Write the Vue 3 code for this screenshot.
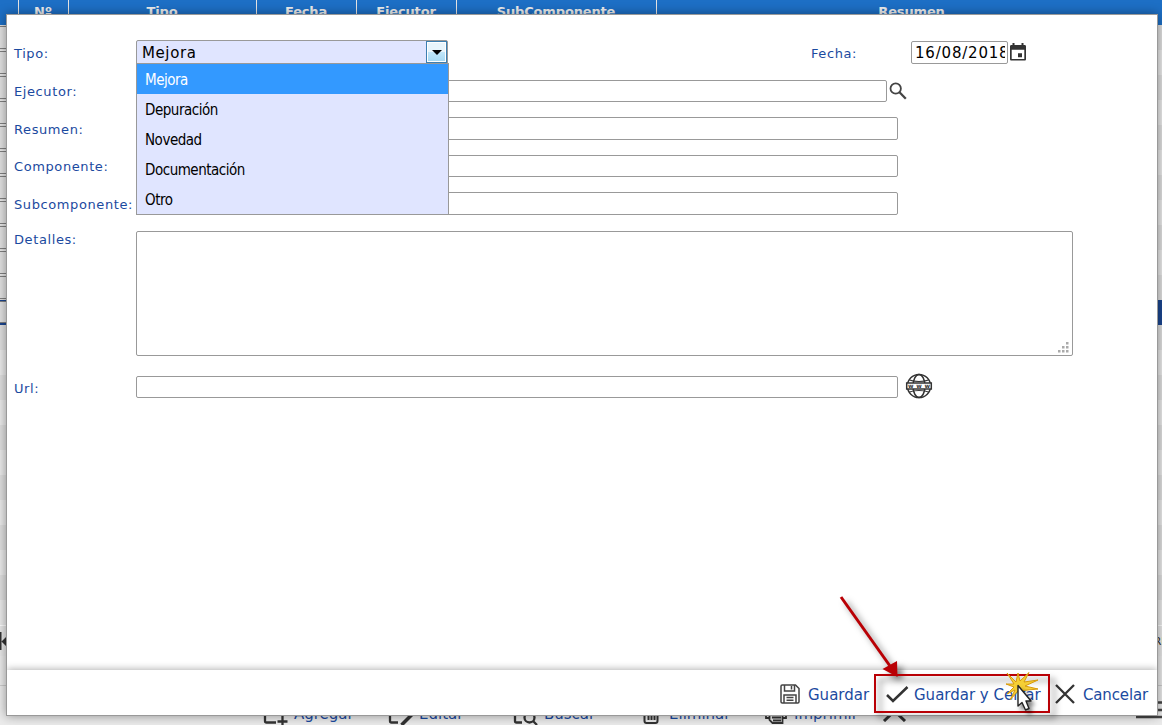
<script setup>
import { ref } from 'vue';

const columns = [
  { name: '', width: 18 },
  { name: 'Nº', width: 50 },
  { name: 'Tipo', width: 188 },
  { name: 'Fecha', width: 100 },
  { name: 'Ejecutor', width: 100 },
  { name: 'SubComponente', width: 200 },
  { name: 'Resumen', width: 511 }
];

const tipos = ['Mejora', 'Depuración', 'Novedad', 'Documentación', 'Otro'];
const tipo = ref('Mejora');
const open = ref(true);

const form = ref({
  fecha: '16/08/2018',
  ejecutor: '',
  resumen: '',
  componente: '',
  subcomponente: '',
  detalles: '',
  url: ''
});

const selectTipo = (value) => {
  tipo.value = value;
  open.value = false;
};
</script>

<template>
  <main class="page">
    <div class="grid-head">
      <div v-for="col in columns" :key="col.name" class="grid-head__cell" :style="{ width: col.width + 'px' }">{{ col.name }}</div>
    </div>
    <div class="grid-rows">
      <div v-for="n in 11" :key="n" class="grid-row"><div class="grid-row__field"></div></div>
      <div class="grid-row grid-row--current"><div class="grid-row__field"></div></div>
      <div v-for="n in 12" :key="'e' + n" class="grid-row grid-row--empty"></div>
    </div>
    <div class="pager">
      <svg width="8" height="20" viewBox="0 0 8 20"><path d="M0 1h1.500v18H0zM8 4v13L1.500 10.500z" fill="#333" /></svg>
      <span>RP</span>
    </div>
    <div class="toolbar">
      <div class="toolbar__item">
        <svg width="26" height="26" viewBox="0 0 26 26"><path d="M20 7V4H3v17q0 1.500 1.500 1.500H14M20.500 16v10M15.500 21.500h10" /></svg>
        <span>Agregar</span>
      </div>
      <div class="toolbar__item">
        <svg width="26" height="26" viewBox="0 0 26 26"><path d="M20 5V4H3v17q0 1.500 1.500 1.500H11" /><path d="M14.500 25L25 14.500" stroke-width="3.500" /></svg>
        <span>Editar</span>
      </div>
      <div class="toolbar__item">
        <svg width="26" height="26" viewBox="0 0 26 26"><path d="M20 7V4H3v17q0 1.500 1.500 1.500H10" /><circle cx="17.500" cy="17.500" r="5" /><path d="M21 21l4 4" /></svg>
        <span>Buscar</span>
      </div>
      <div class="toolbar__item">
        <svg width="26" height="26" viewBox="0 0 26 26"><path d="M7.500 5v16q0 2 2 2h9q2 0 2-2V5M11.500 8v12M14.500 8v12M17.500 8v12" stroke-width="2" /></svg>
        <span>Eliminar</span>
      </div>
      <div class="toolbar__item">
        <svg width="26" height="26" viewBox="0 0 26 26"><path d="M7 18H4V9h20v9h-3M7.500 14h13v9h-10l-3-3zM10 17.500h9M11 20.500h8" stroke-width="1.800" /></svg>
        <span>Imprimir</span>
      </div>
    </div>
    <svg class="page__close" width="26" height="14" viewBox="0 0 26 14"><path d="M2 13L12.500 3 23 13" fill="none" stroke="#333" stroke-width="3" /></svg>
    <svg class="page__menu" width="30" height="20" viewBox="0 0 30 20"><path d="M22 1.500h8M22 9h8M0 16h30" fill="none" stroke="#444" stroke-width="2.500" /></svg>

    <section class="dialog">
      <div class="form">
        <div class="form__row form__row--tipo">
          <label class="form__label">Tipo:</label>
          <div class="select" @click="open = !open">
            <span class="select__value">{{ tipo }}</span>
            <span class="select__btn"></span>
            <ul v-if="open" class="select__list">
              <li v-for="t in tipos" :key="t" :class="['select__option', { 'select__option--active': t === tipo }]" @click.stop="selectTipo(t)">{{ t }}</li>
            </ul>
          </div>
          <label class="form__label form__label--fecha">Fecha:</label>
          <input v-model="form.fecha" class="field field--date" />
          <svg class="icon-calendar" width="18" height="20" viewBox="0 0 18 20">
            <path d="M1 4.500C1 3.500 1.500 3 2.500 3h13c1 0 1.500.5 1.500 1.500V17c0 1-.5 1.500-1.500 1.500h-13C1.500 18.500 1 18 1 17zM2.700 7.800V17h12.600V7.800z" fill="#333" fill-rule="evenodd" />
            <path d="M3.500 1h2v3h-2zM12.500 1h2v3h-2zM9 11.200h4v4H9z" fill="#333" />
          </svg>
        </div>
        <div class="form__row form__row--ejecutor">
          <label class="form__label">Ejecutor:</label>
          <input v-model="form.ejecutor" class="field field--ejecutor" />
          <svg class="icon-search" width="18" height="18" viewBox="0 0 18 18">
            <circle cx="6.700" cy="6.500" r="5.200" fill="none" stroke="#444" stroke-width="1.800" />
            <path d="M10.500 10.300L16.800 16.700" stroke="#444" stroke-width="2.300" />
          </svg>
        </div>
        <div class="form__row form__row--resumen">
          <label class="form__label">Resumen:</label>
          <input v-model="form.resumen" class="field" />
        </div>
        <div class="form__row form__row--componente">
          <label class="form__label">Componente:</label>
          <input v-model="form.componente" class="field" />
        </div>
        <div class="form__row form__row--sub">
          <label class="form__label">Subcomponente:</label>
          <input v-model="form.subcomponente" class="field" />
        </div>
        <div class="form__row form__row--detalles">
          <label class="form__label">Detalles:</label>
          <div class="area">
            <textarea v-model="form.detalles" class="area__input"></textarea>
            <svg class="area__grip" width="12" height="12" viewBox="0 0 12 12">
              <path d="M9 0h2.500v2.500H9zM5 4h2.500v2.500H5zM9 4h2.500v2.500H9zM1 8h2.500v2.500H1zM5 8h2.500v2.500H5zM9 8h2.500v2.500H9z" fill="#aaa" />
            </svg>
          </div>
        </div>
        <div class="form__row form__row--url">
          <label class="form__label">Url:</label>
          <input v-model="form.url" class="field" />
          <svg class="icon-web" width="28" height="28" viewBox="0 0 28 28">
            <g fill="none" stroke="#333" stroke-width="1.500">
              <circle cx="14" cy="14" r="11.600" />
              <ellipse cx="14" cy="14" rx="6" ry="11.600" />
              <path d="M4.500 8c5 2 14 2 19 0M4.500 20c5-2 14-2 19 0" stroke-width="1.200" />
              <rect x="1.700" y="11" width="24.600" height="6" fill="#fff" />
            </g>
            <text x="14" y="16.200" text-anchor="middle" textLength="22">www</text>
          </svg>
        </div>
      </div>
      <footer class="actions">
        <button class="actions__btn actions__btn--save">
          <svg width="20" height="20" viewBox="0 0 20 20" fill="none" stroke="#444" stroke-width="1.500">
            <path d="M1 2.200C1 1.500 1.500 1 2.200 1H15.500L19 4.500V17.800c0 .7-.5 1.200-1.200 1.200H2.200C1.500 19 1 18.500 1 17.800z" />
            <path d="M4.500 1v6h10V1M11.500 2v3.500M4 19v-8h12v8M6.500 13.500h7M6.500 16.200h7" />
          </svg>
          <span>Guardar</span>
        </button>
        <button class="actions__btn actions__btn--close">
          <svg width="24" height="20" viewBox="0 0 24 20" fill="none" stroke="#333" stroke-width="2.500"><path d="M1 11l6 6L21.500 3" /></svg>
          <span>Guardar y Cerrar</span>
        </button>
        <button class="actions__btn actions__btn--cancel">
          <svg width="20" height="20" viewBox="0 0 20 20" fill="none" stroke="#333" stroke-width="2.300"><path d="M1 1l18 18M19 1L1 19" /></svg>
          <span>Cancelar</span>
        </button>
      </footer>
    </section>

    <!-- callout over the save and close button -->
    <svg class="callout" width="240" height="135" viewBox="830 590 240 135">
      <g class="callout__mark">
        <rect x="875" y="675" width="174" height="37" fill="none" stroke="#b90005" stroke-width="2" />
        <path d="M841 597L890 666" stroke="#b90005" stroke-width="3" />
        <path d="M897.500 677L882.500 669L897 661z" fill="#b90005" />
      </g>
      <path d="M1016 682L1007 673L1014 684L1006 684L1014 687L1007 694L1015 690L1010 700L1018 691L1038 689L1025 686L1038 680L1024 682L1029 672.500L1020 681L1018 673z" fill="#f5cf35" stroke="#d79a0e" stroke-width="1" />
      <g class="callout__cursor">
        <path d="M1018 685.500V706L1022 702.500L1025.500 710L1029 708.500L1026 701H1031z" fill="#fff" stroke="#222" stroke-width="1.400" stroke-linejoin="round" />
      </g>
    </svg>
  </main>
</template>

<style>
body {
  overflow: hidden;
}
</style>

<style scoped>
.page {
  position: relative;
  display: flex;
  flex-direction: column;
  width: 1162px;
  height: 725px;
  overflow: hidden;
  background: #ebebeb;
  font-family: Verdana, "DejaVu Sans", sans-serif;
}

.grid-head {
  display: flex;
  flex: none;
  height: 25px;
  background: #1d6fc5;
}

.grid-head__cell {
  box-sizing: border-box;
  flex: none;
  border-right: 1px solid #e4e4e4;
  margin-right: -1px;
  padding-right: 1px;
  margin-left: 1px;
  color: #eee;
  font-size: 13px;
  font-weight: bold;
  letter-spacing: -0.15px;
  line-height: 24px;
  text-align: center;
}

.grid-row {
  box-sizing: border-box;
  height: 25px;
  padding-top: 1px;
  background: #ebebeb;
}

.grid-row:nth-child(odd) {
  background: #e0e0e0;
}

.grid-row__field {
  box-sizing: border-box;
  width: 60px;
  height: 23px;
  border: 1px solid #808080;
  border-left: 0;
  background: #e2e2e2;
}

.grid-row--current {
  padding-top: 0;
  border-top: 1px solid #1b4690;
  border-bottom: 2px solid #1b4690;
  background: #1b4690 !important;
}

.grid-row--current .grid-row__field {
  height: 22px;
}

.pager {
  display: flex;
  flex: none;
  align-items: center;
  justify-content: space-between;
  height: 30px;
  border-top: 1px solid #fff;
  margin-bottom: 29px;
  background: #e8e8e8;
  color: #333;
  font-size: 11px;
}

.pager span {
  margin-right: -6px;
}

.toolbar {
  display: flex;
  flex: 1;
  border-top: 1px solid #ccc;
  padding-left: 262px;
  color: #1b4aa0;
  font-size: 15px;
}

.toolbar__item {
  display: flex;
  flex: none;
  width: 125px;
  padding-top: 14px;
  gap: 6px;
  line-height: 28px;
}

.toolbar svg {
  overflow: visible;
  fill: none;
  stroke: #333;
  stroke-width: 2.300;
}

.page__close {
  position: absolute;
  left: 882px;
  top: 708px;
}

.page__menu {
  position: absolute;
  left: 1136px;
  top: 701px;
}

.dialog {
  position: absolute;
  left: 6px;
  top: 14px;
  box-sizing: border-box;
  display: flex;
  flex-direction: column;
  width: 1152px;
  height: 702px;
  border: 1px solid #999;
  background: #fff;
  box-shadow: 0 0 10px rgba(0, 0, 0, 0.4);
}

.form {
  display: grid;
  flex: 1;
  grid-template-rows: 40px 37px 38px 37px 39px 145px 30px;
  padding: 25px 0 0 7px;
}

.form__row {
  display: flex;
  align-items: flex-start;
}

.form__label {
  flex: none;
  width: 122px;
  color: #1b4aa0;
  font-size: 13px;
  letter-spacing: 0.6px;
  line-height: 23px;
  white-space: nowrap;
}

.form__row--tipo .form__label {
  line-height: 27px;
}

.form__row--resumen .form__label,
.form__row--sub .form__label {
  line-height: 25px;
}

.form__row--detalles .form__label {
  line-height: 17px;
}

.form__row--url .form__label {
  line-height: 25px;
}

.form__label--fecha {
  width: 100px;
  margin-left: 363px;
}

.field {
  box-sizing: border-box;
  width: 762px;
  height: 22px;
  border: 1px solid #999;
  border-radius: 2px;
  outline: none;
  background: #fff;
  font-family: Verdana, "DejaVu Sans", sans-serif;
}

.form__row--resumen .field,
.form__row--sub .field {
  height: 23px;
}

.field--ejecutor {
  width: 751px;
}

.field--date {
  width: 97px;
  height: 23px;
  margin-top: 1px;
  padding: 0 2px 0 3px;
  color: #000;
  font-size: 15px;
  letter-spacing: 0.8px;
}

.icon-calendar {
  margin: 2px 0 0 1px;
}

.icon-search {
  margin: 2px 0 0 2px;
}

.icon-web {
  margin: -4px 0 0 7px;
}

.icon-web text {
  fill: #333;
  font-size: 6px;
  font-weight: bold;
}

.select {
  position: relative;
  box-sizing: border-box;
  display: flex;
  width: 312px;
  height: 24px;
  border: 1px solid #999;
  border-radius: 2px 2px 0 0;
  background: #e0e5ff;
}

.select__value {
  flex: 1;
  padding-left: 5px;
  color: #000;
  font-size: 15px;
  letter-spacing: 0.6px;
  line-height: 25px;
}

.select__btn {
  box-sizing: border-box;
  display: flex;
  align-items: center;
  justify-content: center;
  width: 21px;
  height: 22px;
  border: 1px solid #3c7fb1;
  box-shadow: inset 0 0 0 1px #fff;
  background: linear-gradient(#e8f5fc 48%, #c1e6f9 50%, #a4d8f3);
}

.select__btn::after {
  content: '';
  border: 5px solid transparent;
  border-top: 5px solid #000;
  border-bottom: 0;
}

.select__list {
  position: absolute;
  left: -1px;
  top: 22px;
  z-index: 1;
  width: 311px;
  margin: 0;
  border: 1px solid #999;
  padding: 0;
  background: #e0e5ff;
  list-style: none;
}

.select__option {
  height: 30px;
  padding-left: 8px;
  color: #000;
  font-family: Tahoma, "DejaVu Sans Condensed", "DejaVu Sans", sans-serif;
  font-size: 15px;
  font-stretch: condensed;
  letter-spacing: -0.48px;
  line-height: 33px;
}

.select__option--active {
  background: #3399ff;
  color: #fff;
}

.area {
  position: relative;
  box-sizing: border-box;
  width: 937px;
  height: 125px;
  border: 1px solid #999;
  border-radius: 2px;
}

.area__input {
  box-sizing: border-box;
  width: 100%;
  height: 100%;
  border: 0;
  outline: none;
  background: transparent;
  resize: none;
}

.area__grip {
  position: absolute;
  right: 3px;
  bottom: 1px;
}

.actions {
  display: flex;
  flex: none;
  align-items: center;
  justify-content: flex-end;
  box-sizing: border-box;
  height: 45px;
  padding: 3px 9px 0 0;
  background: #fff;
  box-shadow: 0 -1px 7px rgba(0, 0, 0, 0.3);
  clip-path: inset(-10px 0 0 0);
}

.actions__btn {
  display: flex;
  align-items: center;
  border: 0;
  padding: 0;
  background: none;
  color: #1b4aa0;
  font-family: Verdana, "DejaVu Sans", sans-serif;
  font-size: 15px;
  line-height: 24px;
  white-space: nowrap;
}

.actions__btn span {
  margin-top: 2px;
}

.actions__btn--save {
  width: 106px;
  gap: 8px;
}

.actions__btn--close {
  width: 169px;
  gap: 4px;
}

.actions__btn--cancel {
  width: 93px;
  gap: 8px;
  letter-spacing: -0.15px;
}

.callout {
  position: absolute;
  left: 830px;
  top: 590px;
  pointer-events: none;
}

.callout__mark {
  filter: drop-shadow(5px 5px 3px rgba(0, 0, 0, 0.5));
}

.callout__cursor {
  filter: drop-shadow(3px 4px 2px rgba(0, 0, 0, 0.5));
}
</style>
